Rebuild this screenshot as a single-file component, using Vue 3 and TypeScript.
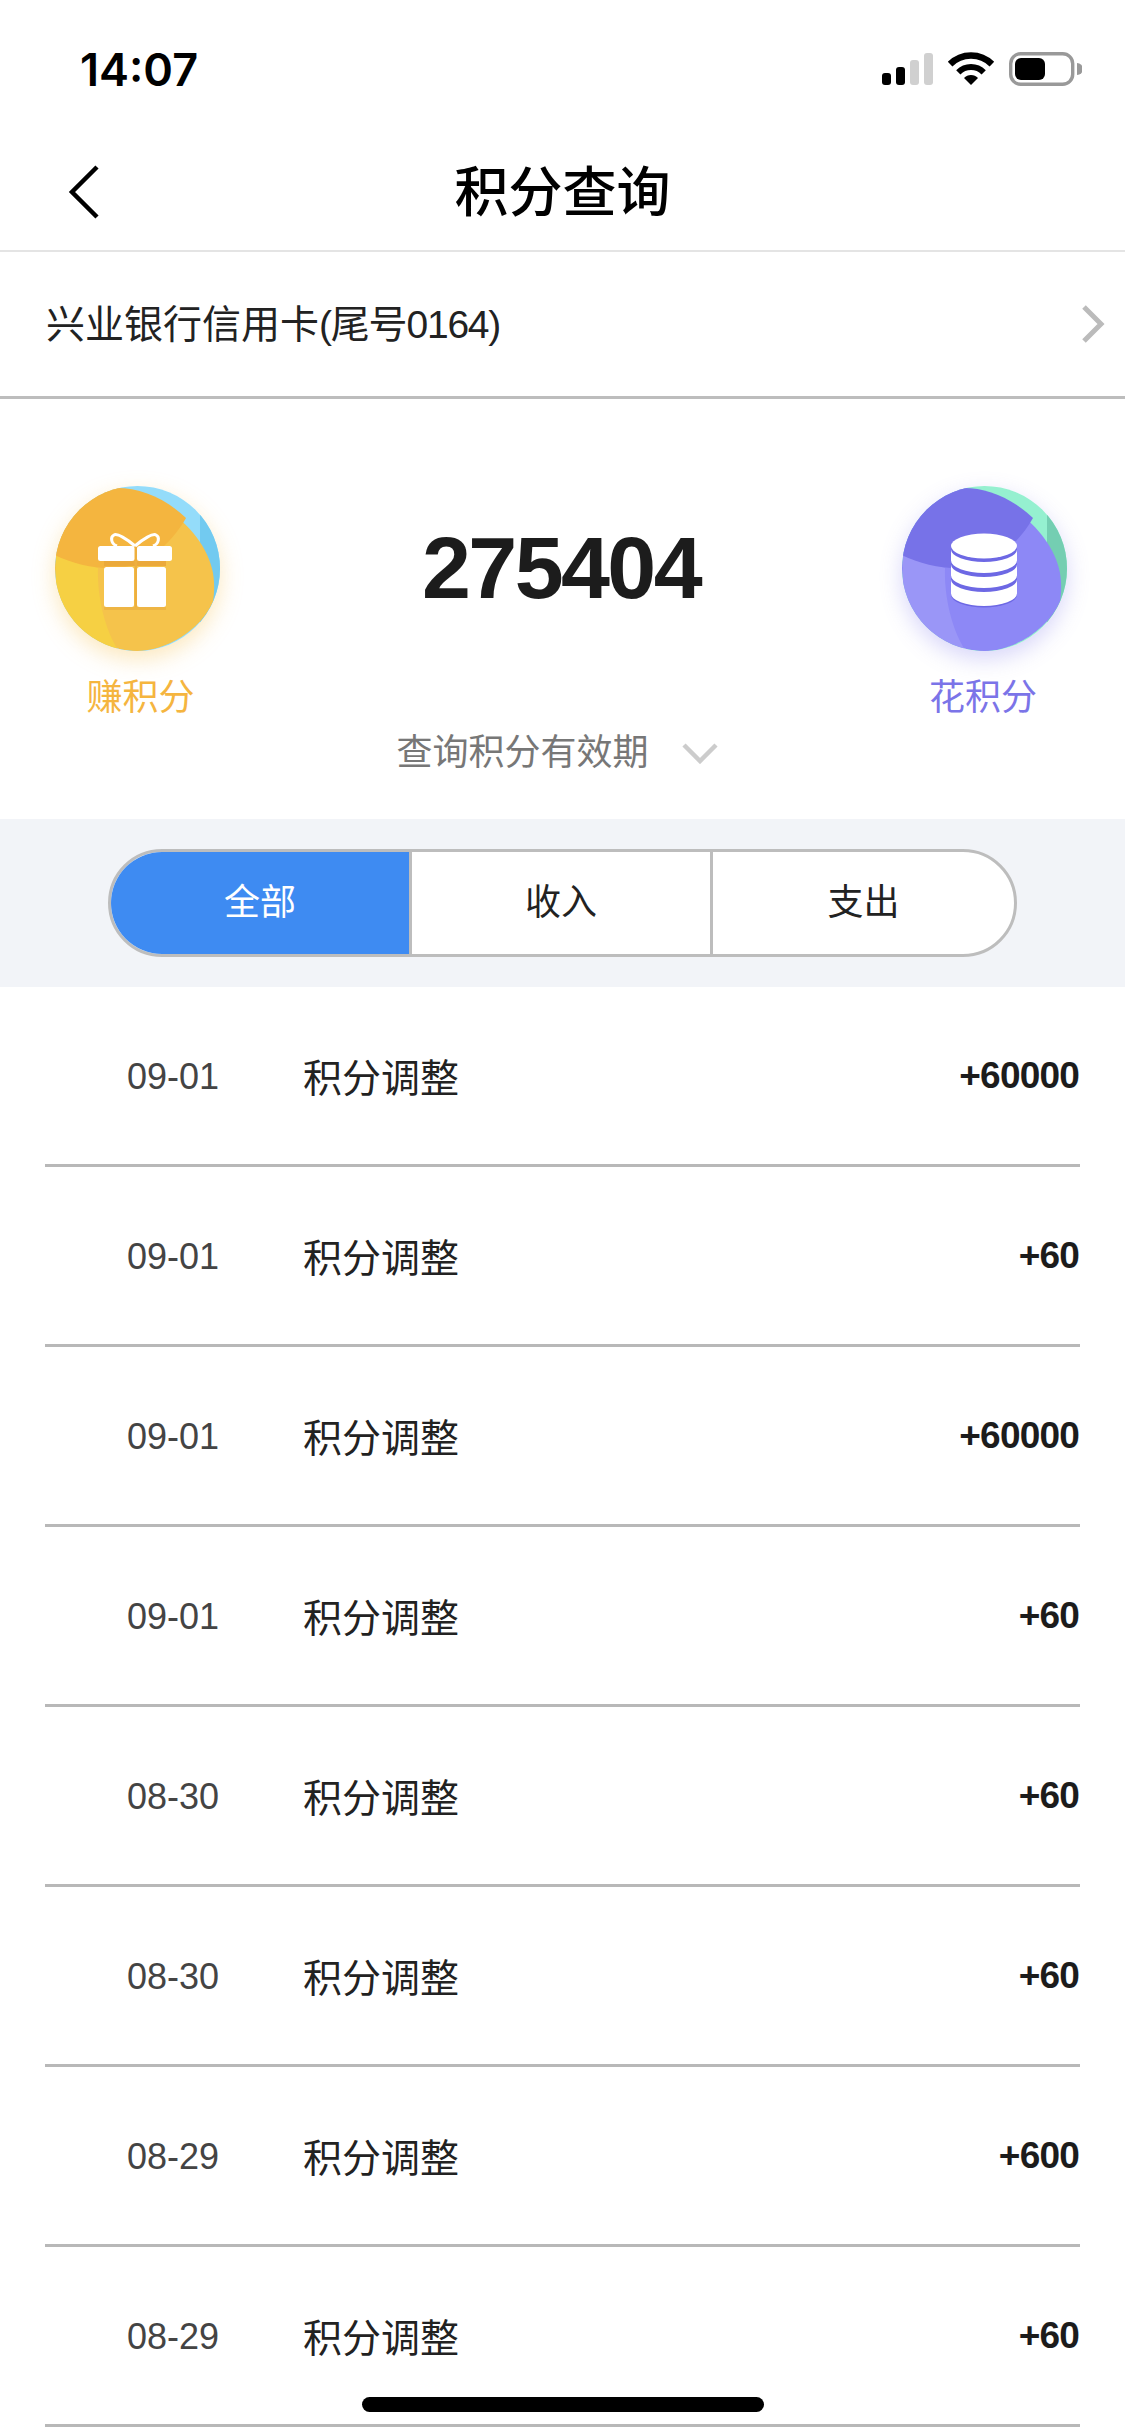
<script setup lang="ts">
import { ref } from 'vue'

interface PointRecord {
  date: string
  title: string
  amount: string
}

const tabs = ['全部', '收入', '支出']
const activeTab = ref(0)

const records: PointRecord[] = [
  { date: '09-01', title: '积分调整', amount: '+60000' },
  { date: '09-01', title: '积分调整', amount: '+60' },
  { date: '09-01', title: '积分调整', amount: '+60000' },
  { date: '09-01', title: '积分调整', amount: '+60' },
  { date: '08-30', title: '积分调整', amount: '+60' },
  { date: '08-30', title: '积分调整', amount: '+60' },
  { date: '08-29', title: '积分调整', amount: '+600' },
  { date: '08-29', title: '积分调整', amount: '+60' },
]
</script>

<template>
  <div class="page">
    <div class="status-bar">
      <span class="time">14:07</span>
      <svg class="status-icons" width="200" height="34" viewBox="0 0 200 34">
        <rect x="0" y="21" width="9" height="12" rx="3" fill="#000" />
        <rect x="14" y="15" width="9" height="18" rx="3" fill="#000" />
        <rect x="28" y="8" width="9" height="25" rx="3" fill="#d0d0d0" />
        <rect x="42" y="1" width="9" height="32" rx="3" fill="#d0d0d0" />
        <path d="M68.1 12.1A29.5 29.5 0 0 1 109.9 12.1" fill="none" stroke="#000" stroke-width="6.5" />
        <path d="M76.3 20.3A18 18 0 0 1 101.7 20.3" fill="none" stroke="#000" stroke-width="6" />
        <path d="M89 33L82 26A9.5 9.5 0 0 1 96 26Z" fill="#000" />
        <rect x="128.7" y="1.7" width="62" height="30.6" rx="10" fill="none" stroke="#999" stroke-width="3.4" />
        <rect x="133" y="6" width="30" height="22" rx="6" fill="#000" />
        <path d="M195 11A6 6 0 0 1 195 23Z" fill="#999" />
      </svg>
    </div>

    <div class="nav-bar">
      <svg class="back" width="34" height="56" viewBox="0 0 34 56">
        <path d="M30 3L5 28L30 53" fill="none" stroke="#000" stroke-width="4.5" />
      </svg>
      <h1>积分查询</h1>
    </div>

    <div class="card-row">
      <span class="card-name">兴业银行信用卡<span class="tail">(尾号0164)</span></span>
      <svg width="24" height="38" viewBox="0 0 24 38">
        <path d="M3 2L20 19L3 36" fill="none" stroke="#bbb" stroke-width="5" />
      </svg>
    </div>

    <section class="hero">
      <div class="hero-top">
        <div class="action earn">
          <div class="badge">
            <svg width="165" height="165" viewBox="0 0 165 165">
              <defs>
                <clipPath id="earn-clip"><circle cx="82.5" cy="82.5" r="82.5" /></clipPath>
              </defs>
              <g clip-path="url(#earn-clip)">
                <rect width="165" height="165" fill="#94dcfa" />
                <rect x="145" y="0" width="20" height="165" fill="#72caf0" />
                <path d="M62 2C105 10 150 45 158 87C160 100 159 108 158 116C145 145 110 165 82 165C40 165 0 130 0 82C0 40 30 8 62 2Z" fill="#f5c34b" />
                <path d="M1 70L43 82C42 110 50 145 64 165H0Z" fill="#f6d043" />
                <path d="M0 69C18 78 40 83 62 82C90 80 115 60 131 32C110 12 85 2 62 2C30 8 5 35 0 69Z" fill="#f4b53f" />
              </g>
              <rect x="49" y="75" width="62" height="5" fill="#eba93a" />
              <rect x="49" y="121" width="62" height="3" fill="#eeb544" />
              <rect x="79.5" y="60" width="2.5" height="61" fill="#eeaf3e" />
              <path d="M80 60C72 53 62 47 59 49C55 51 56 58 62 60M80 60C88 53 98 47 101 49C105 51 104 58 98 60" fill="none" stroke="#fff" stroke-width="3" />
              <rect x="43" y="60" width="36.5" height="15" rx="2.5" fill="#fff" />
              <rect x="82" y="60" width="35" height="15" rx="2.5" fill="#fff" />
              <rect x="49" y="81" width="30" height="40" rx="2.5" fill="#fff" />
              <rect x="82" y="81" width="29" height="40" rx="2.5" fill="#fff" />
            </svg>
          </div>
          <span class="label">赚积分</span>
        </div>

        <div class="total">275404</div>

        <div class="action spend">
          <div class="badge">
            <svg width="165" height="165" viewBox="0 0 165 165">
              <defs>
                <clipPath id="spend-clip"><circle cx="82.5" cy="82.5" r="82.5" /></clipPath>
              </defs>
              <g clip-path="url(#spend-clip)">
                <rect width="165" height="165" fill="#95f0d0" />
                <rect x="145" y="0" width="20" height="165" fill="#74ceb2" />
                <path d="M62 2C105 10 150 45 158 87C160 100 159 108 158 116C145 145 110 165 82 165C40 165 0 130 0 82C0 40 30 8 62 2Z" fill="#8d88f6" />
                <path d="M1 70L43 82C42 110 50 145 64 165H0Z" fill="#9a96f7" />
                <path d="M0 69C18 78 40 83 62 82C90 80 115 60 131 32C110 12 85 2 62 2C30 8 5 35 0 69Z" fill="#7772e8" />
              </g>
              <path d="M49 60H115V109A33 12.5 0 0 1 49 109Z" fill="#6d68e4" />
              <ellipse cx="82" cy="60" rx="33" ry="12.5" fill="#fff" />
              <path d="M49 63.5A33 12.5 0 0 0 115 63.5V74.5A33 12.5 0 0 1 49 74.5Z" fill="#fff" />
              <path d="M49 78.5A33 12.5 0 0 0 115 78.5V89.5A33 12.5 0 0 1 49 89.5Z" fill="#fff" />
              <path d="M49 93.5A33 12.5 0 0 0 115 93.5V107.5A33 12.5 0 0 1 49 107.5Z" fill="#fff" />
            </svg>
          </div>
          <span class="label">花积分</span>
        </div>
      </div>

      <div class="expiry">
        <span>查询积分有效期</span>
        <svg width="36" height="22" viewBox="0 0 36 22">
          <path d="M2 3L18 19L34 3" fill="none" stroke="#ccc" stroke-width="4.5" />
        </svg>
      </div>
    </section>

    <div class="tabs-wrap">
      <div class="tabs">
        <div
          v-for="(tab, i) in tabs"
          :key="tab"
          class="tab"
          :class="{ active: i === activeTab }"
          @click="activeTab = i"
        >
          <span>{{ tab }}</span>
        </div>
      </div>
    </div>

    <ul class="records">
      <li v-for="(item, i) in records" :key="i" class="record">
        <span class="date">{{ item.date }}</span>
        <span class="title">{{ item.title }}</span>
        <span class="amount">{{ item.amount }}</span>
      </li>
    </ul>

    <div class="home-indicator"></div>
  </div>
</template>

<style>
html,
body {
  margin: 0;
  background: #fff;
}
</style>

<style scoped>
.page {
  position: relative;
  width: 1125px;
  height: 2436px;
  overflow: hidden;
  background: #fff;
  font-family: "Liberation Sans", "Noto Sans CJK SC", sans-serif;
  color: #222;
}

.status-bar {
  height: 138px;
  box-sizing: border-box;
  padding: 0 43px 0 80px;
  display: flex;
  justify-content: space-between;
  align-items: center;
}

.time {
  font-family: Inter, sans-serif;
  font-size: 45px;
  font-weight: 600;
  color: #000;
}

.nav-bar {
  position: relative;
  height: 112px;
  border-bottom: 2px solid #e4e4e4;
  display: flex;
  justify-content: center;
  align-items: center;
}

.nav-bar h1 {
  margin: 0 0 12px;
  font-size: 54px;
  font-weight: 500;
  color: #000;
}

.back {
  position: absolute;
  left: 67px;
  top: 26px;
}

.card-row {
  height: 144px;
  padding: 0 20px 0 46px;
  border-bottom: 3px solid #bdbdbd;
  display: flex;
  justify-content: space-between;
  align-items: center;
  font-size: 39px;
}

.card-name {
  margin-bottom: 6px;
}

.tail {
  letter-spacing: -1.2px;
}

.hero {
  height: 420px;
  box-sizing: border-box;
  padding-top: 87px;
}

.hero-top {
  display: flex;
  justify-content: space-between;
  padding: 0 58px 0 55px;
}

.action {
  width: 165px;
  display: flex;
  flex-direction: column;
  align-items: center;
}

.badge {
  width: 165px;
  height: 165px;
  border-radius: 50%;
}

.badge svg {
  display: block;
}

.earn .badge {
  box-shadow: 0 8px 22px rgba(245, 190, 70, 0.35);
}

.spend .badge {
  box-shadow: 0 8px 22px rgba(125, 118, 235, 0.3);
}

.label {
  margin-top: 27px;
  font-size: 36px;
  line-height: 40px;
  white-space: nowrap;
}

.earn .label {
  margin-left: 6px;
  color: #f5b53f;
}

.spend .label {
  margin-right: 3px;
  color: #7b74e8;
}

.total {
  font-size: 88px;
  letter-spacing: -2.6px;
  font-weight: 700;
  line-height: 163px;
  height: 165px;
  color: #1c1c1c;
}

.expiry {
  margin-top: 15px;
  display: flex;
  justify-content: center;
  align-items: center;
  gap: 33px;
  padding-right: 11px;
  font-size: 36px;
  line-height: 40px;
  color: #777;
}

.tabs-wrap {
  height: 168px;
  box-sizing: border-box;
  padding: 30px 108px;
  background: #f2f4f8;
}

.tabs {
  height: 108px;
  box-sizing: border-box;
  border: 3px solid #bdbdbd;
  border-radius: 54px;
  background: #fff;
  overflow: hidden;
  display: grid;
  grid-template-columns: 298px 301px 1fr;
}

.tab {
  display: flex;
  justify-content: center;
  align-items: center;
  font-size: 36px;
  color: #222;
  border-left: 3px solid #bdbdbd;
}

.tab span {
  margin-bottom: 8px;
}

.tab:first-child {
  border-left: none;
}

.tab.active {
  background: #3e8bf2;
  color: #fff;
}

.records {
  list-style: none;
  margin: 0;
  padding: 0 45px;
}

.record {
  height: 177px;
  border-bottom: 3px solid #b8b8b8;
  display: flex;
  align-items: center;
}

.date {
  width: 258px;
  box-sizing: border-box;
  padding-left: 82px;
  flex: none;
  margin-top: 3px;
  font-size: 36px;
  color: #444;
}

.title {
  flex: 1;
  margin-bottom: 2px;
  font-size: 39px;
  color: #222;
}

.amount {
  margin-top: 1px;
  margin-right: 1px;
  font-size: 37px;
  letter-spacing: -0.8px;
  font-weight: 700;
  color: #1c1c1c;
}

.home-indicator {
  position: absolute;
  left: 362px;
  top: 2397px;
  width: 402px;
  height: 15px;
  border-radius: 8px;
  background: #000;
}
</style>
